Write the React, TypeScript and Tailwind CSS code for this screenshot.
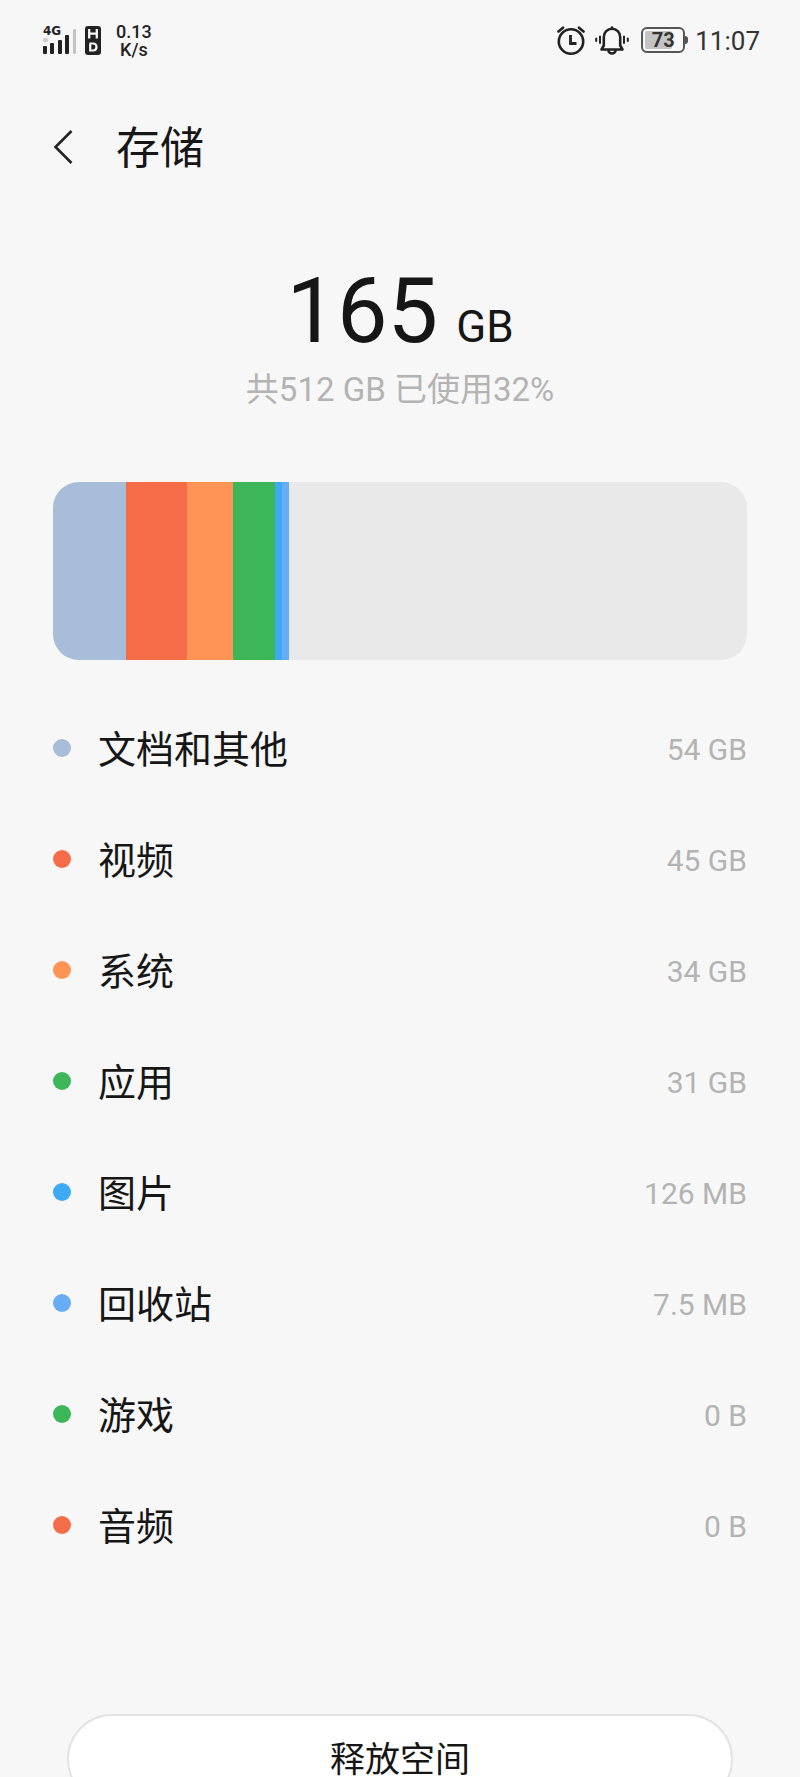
import { clsx } from "clsx";

type Category = {
  name: string;
  label: string;
  gb: number;
  color: string;
};

const TOTAL_GB = 512;

const categories: Category[] = [
  { name: "文档和其他", label: "54 GB", gb: 54, color: "bg-[#a8bdd9]" },
  { name: "视频", label: "45 GB", gb: 45, color: "bg-[#f46c48]" },
  { name: "系统", label: "34 GB", gb: 34, color: "bg-[#ff9455]" },
  { name: "应用", label: "31 GB", gb: 31, color: "bg-[#3db65a]" },
  { name: "图片", label: "126 MB", gb: 0.126, color: "bg-[#3fa9f5]" },
  { name: "回收站", label: "7.5 MB", gb: 0.0075, color: "bg-[#66adf5]" },
  { name: "游戏", label: "0 B", gb: 0, color: "bg-[#3db65a]" },
  { name: "音频", label: "0 B", gb: 0, color: "bg-[#f46c48]" },
];

function SignalIcon() {
  return (
    <div className="flex flex-col w-9">
      <span className="font-['DejaVu_Sans'] text-xs leading-[10px] font-bold">
        4G
      </span>
      <svg
        width="34"
        height="26"
        viewBox="0 0 34 26"
        className="-mt-2"
        fill="#222"
        aria-hidden="true"
      >
        <circle cx="2.500" cy="12" r="2.500" fill="#cfcfcf" />
        <rect x="0" y="18" width="4" height="8" rx="1" />
        <rect x="7" y="15" width="4" height="11" rx="1" />
        <rect x="15" y="12" width="4" height="14" rx="1" />
        <rect x="22" y="7" width="4" height="19" rx="1" />
        <rect x="30" y="1" width="3" height="25" rx="1" fill="#c4c4c4" />
      </svg>
    </div>
  );
}

function HdBadge() {
  return (
    <svg width="16" height="29" viewBox="0 0 16 29" aria-hidden="true">
      <rect width="16" height="29" rx="3" fill="#222" />
      <path
        d="M4.200 3v9.500M11.800 3v9.500M4.200 7.700h7.600"
        stroke="#f7f7f7"
        strokeWidth="2.300"
        fill="none"
      />
      <path
        d="M4.500 17.500h3.500c2.200 0 3.500 1 3.500 3.500S10.200 24.500 8 24.500H5.200v-7"
        stroke="#f7f7f7"
        strokeWidth="2.200"
        fill="none"
      />
    </svg>
  );
}

function AlarmIcon() {
  return (
    <svg
      width="28"
      height="29"
      viewBox="0 0 28 29"
      fill="none"
      stroke="#222"
      strokeLinecap="round"
      aria-hidden="true"
    >
      <circle cx="14" cy="15.500" r="12.200" strokeWidth="2.600" />
      <path d="M1.500 5.500L6 1.700M26.500 5.500L22 1.700" strokeWidth="2.600" />
      <path d="M13.500 9v8.500h6" strokeWidth="2.800" strokeLinecap="butt" />
    </svg>
  );
}

function BellIcon() {
  return (
    <svg
      width="34"
      height="29"
      viewBox="0 0 34 29"
      fill="none"
      stroke="#222"
      strokeWidth="2.600"
      strokeLinejoin="round"
      strokeLinecap="round"
      aria-hidden="true"
    >
      <path d="M6.500 23.500l2.300-4V11a8.200 8.200 0 0 1 16.400 0v8.500l2.300 4z" />
      <path d="M17 2.500V1.500" />
      <path d="M13.500 24.500a3.500 3 0 0 0 7 0" />
      <path d="M5 10.500v6.500M29 10.500v6.500" strokeWidth="2" />
      <path d="M1.200 12.500v2.500M32.800 12.500v2.500" strokeWidth="2" />
    </svg>
  );
}

function Battery() {
  return (
    <div className="flex items-center">
      <div className="relative flex items-center justify-center w-11 h-[26px] rounded-md border-2 border-[#555]">
        <div className="absolute left-0.5 inset-y-0.5 w-[27px] rounded-xs bg-[#c4c4c4]" />
        <span className="relative text-[20px] leading-none font-bold text-[#333]">
          73
        </span>
      </div>
      <div className="w-[3px] h-2 rounded-r-full bg-[#555]" />
    </div>
  );
}

function StatusBar() {
  return (
    <div className="flex items-center justify-between h-20 pl-[43px] pr-10 text-[#222]">
      <div className="flex items-center">
        <SignalIcon />
        <div className="ml-1.5">
          <HdBadge />
        </div>
        <div className="ml-[15px] pt-0.5 text-center text-[18px] leading-[18px] font-medium">
          <div>0.13</div>
          <div>K/s</div>
        </div>
      </div>
      <div className="flex items-center">
        <AlarmIcon />
        <div className="ml-2.5">
          <BellIcon />
        </div>
        <div className="ml-3">
          <Battery />
        </div>
        <span className="ml-[7px] pt-0.5 text-[26px] leading-none text-[#333]">
          11:07
        </span>
      </div>
    </div>
  );
}

function CategoryRow({ category }: { category: Category }) {
  return (
    <li className="flex items-center h-[111px]">
      <span className={clsx("size-[18px] rounded-full", category.color)} />
      <span className="ml-[27px] pt-1 text-[38px] leading-none">
        {category.name}
      </span>
      <span className="ml-auto pt-1 text-[30px] leading-none text-[#b3b3b3]">
        {category.label}
      </span>
    </li>
  );
}

export default function App() {
  return (
    <div className="h-screen overflow-hidden bg-[#f7f7f7] text-[#161616] font-['Roboto','Noto_Sans_CJK_SC',sans-serif]">
      <StatusBar />

      <header className="flex items-center h-[134px] px-[53px]">
        <button type="button" aria-label="返回">
          <svg
            width="20"
            height="34"
            viewBox="0 0 20 34"
            fill="none"
            stroke="#222"
            strokeWidth="2.600"
            aria-hidden="true"
          >
            <path d="M18.500 1L2.500 17l16 16" />
          </svg>
        </button>
        <h1 className="ml-[43px] pt-1 text-[44px] leading-none">存储</h1>
      </header>

      <main className="px-[53px] pt-[46px]">
        <div className="flex items-baseline justify-center gap-[18px]">
          <span className="text-[90px] leading-[104px]">165</span>
          <span className="text-[44px] leading-none">GB</span>
        </div>
        <p className="text-center text-[33px] leading-[52px] text-[#b3b3b3]">
          共512 GB 已使用32%
        </p>

        <div className="flex h-[178px] mt-[66px] rounded-[26px] overflow-hidden bg-[#e9e9e9]">
          {categories
            .filter((category) => category.gb > 0)
            .map((category) => (
              <div
                key={category.name}
                className={clsx("min-w-[7px]", category.color)}
                style={{ width: `${(category.gb / TOTAL_GB) * 100}%` }}
              />
            ))}
        </div>

        <ul className="mt-8">
          {categories.map((category) => (
            <CategoryRow key={category.name} category={category} />
          ))}
        </ul>
      </main>

      <footer className="px-[67px] pt-[134px]">
        <button
          type="button"
          className="w-full h-[90px] pt-0.5 rounded-full border-2 border-[#e3e3e3] bg-white text-[35px] leading-none"
        >
          释放空间
        </button>
      </footer>
    </div>
  );
}
